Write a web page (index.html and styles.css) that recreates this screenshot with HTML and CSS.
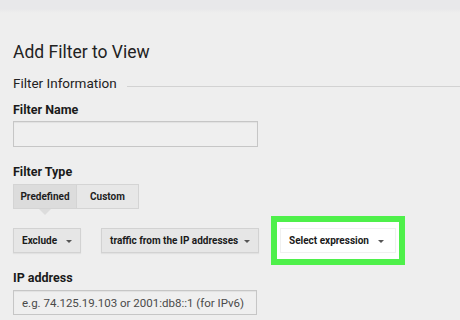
FILE: index.html
```html
<!DOCTYPE html>
<html lang="en">
<head>
  <meta charset="UTF-8" />
  <meta name="viewport" content="width=device-width, initial-scale=1.0" />
  <title>Add Filter to View</title>
  <link rel="stylesheet" href="styles.css">
</head>
<body>

<div class="topbar"></div>

<main class="page">
  <h1 class="page-title">Add Filter to View</h1>

  <!-- Filter Information section -->
  <div class="section-head">
    <span>Filter Information</span>
    <span class="section-line"></span>
  </div>

  <label class="field-label" for="filterName">Filter Name</label>
  <input type="text" id="filterName" class="text-input name-input" />

  <div class="field-label type-label">Filter Type</div>
  <div class="segmented">
    <button class="seg-btn active">Predefined</button>
    <button class="seg-btn">Custom</button>
  </div>

  <!-- Predefined filter dropdowns -->
  <div class="dropdown-row">
    <div class="dropdown exclude">Exclude <span class="caret"></span></div>
    <div class="dropdown traffic">traffic from the IP addresses <span class="caret"></span></div>
    <div class="highlight">
      <div class="dropdown expression">Select expression <span class="caret"></span></div>
    </div>
  </div>

  <label class="field-label ip-label" for="ipAddress">IP address</label>
  <input type="text" id="ipAddress" class="text-input ip-input" placeholder="e.g. 74.125.19.103 or 2001:db8::1 (for IPv6)" />
</main>

</body>
</html>
```

FILE: styles.css
```css
/* =========================
   General Page Styling
   ========================= */
body {
  font-family: Roboto, "Liberation Sans", Arial, sans-serif;
  background-color: #eeeeee;
  color: #222;
  margin: 0;
  padding: 0;
}

.topbar {
  height: 13px;
  background: linear-gradient(#e8e8ea 0, #e8e8ea 9px, #eeeeee 13px);
}

.page {
  padding: 0 0 0 13px;
}

/* =========================
   Headings
   ========================= */
.page-title {
  font-size: 17.5px;
  font-weight: 400;
  line-height: 22px;
  margin: 28px 0 0;
  color: #222;
}

.section-head {
  display: flex;
  align-items: flex-start;
  margin-top: 11px;
  font-size: 13.5px;
  line-height: 18px;
  color: #222;
}

.section-line {
  flex: 1;
  height: 1px;
  background-color: #d2d2d2;
  margin: 12px 0 0 10px;
}

/* =========================
   Fields
   ========================= */
.field-label {
  display: block;
  font-size: 12.5px;
  font-weight: 700;
  line-height: 15px;
  margin-top: 10px;
  color: #1a1a1a;
}

.type-label {
  margin-top: 17px;
}

.ip-label {
  margin-top: 5px;
}

.text-input {
  display: block;
  box-sizing: border-box;
  background-color: #efefef;
  border: 1px solid #c6c6c6;
  border-radius: 0;
  box-shadow: inset 0 1px 1px rgba(0, 0, 0, 0.06);
  font-family: inherit;
  padding: 0 8px;
  margin: 0;
}

.name-input {
  width: 245px;
  height: 26px;
  margin-top: 4px;
}

.ip-input {
  width: 244px;
  height: 25px;
  margin-top: 5px;
  font-size: 11.5px;
}

.ip-input::placeholder {
  color: #4a4a4a;
}

/* =========================
   Segmented Buttons
   ========================= */
.segmented {
  display: flex;
  width: 126px;
  height: 25px;
  margin-top: 5px;
}

.seg-btn {
  position: relative;
  box-sizing: border-box;
  height: 25px;
  border: 1px solid #d4d4d4;
  background-color: #e7e7e7;
  font-family: inherit;
  font-size: 10px;
  font-weight: 700;
  color: #1e1e1e;
  padding: 0;
  margin: 0;
}

.seg-btn:first-child {
  width: 64px;
}

.seg-btn + .seg-btn {
  width: 62px;
  border-left: none;
}

.seg-btn.active {
  background-color: #dcdcdc;
}

.seg-btn.active::after {
  content: "";
  position: absolute;
  left: 25px;
  top: 24px;
  border-left: 6px solid transparent;
  border-right: 6px solid transparent;
  border-top: 6px solid #dcdcdc;
}

/* =========================
   Dropdown Row
   ========================= */
.dropdown-row {
  display: flex;
  align-items: center;
  margin-top: 7px;
}

.dropdown {
  display: flex;
  align-items: center;
  justify-content: space-between;
  box-sizing: border-box;
  height: 25px;
  padding: 0 8px;
  background-color: #e6e6e6;
  border: 1px solid #d2d2d2;
  box-shadow: 0 1px 1px rgba(0, 0, 0, 0.05);
  font-size: 10px;
  font-weight: 700;
  color: #1a1a1a;
  white-space: nowrap;
}

.caret {
  width: 0;
  height: 0;
  border-left: 3px solid transparent;
  border-right: 3px solid transparent;
  border-top: 3px solid #555;
  margin-top: 1px;
}

.exclude {
  width: 68px;
}

.traffic {
  width: 158px;
  margin-left: 20px;
}

.highlight {
  margin-left: 12px;
  padding: 6px 3px;
  background-color: #fff;
  border: 6px solid #4ef04a;
}

.expression {
  width: 116px;
  background-color: #fff;
  border-color: #f0f0f0;
  box-shadow: none;
  padding: 0 11px 0 8px;
}
```
